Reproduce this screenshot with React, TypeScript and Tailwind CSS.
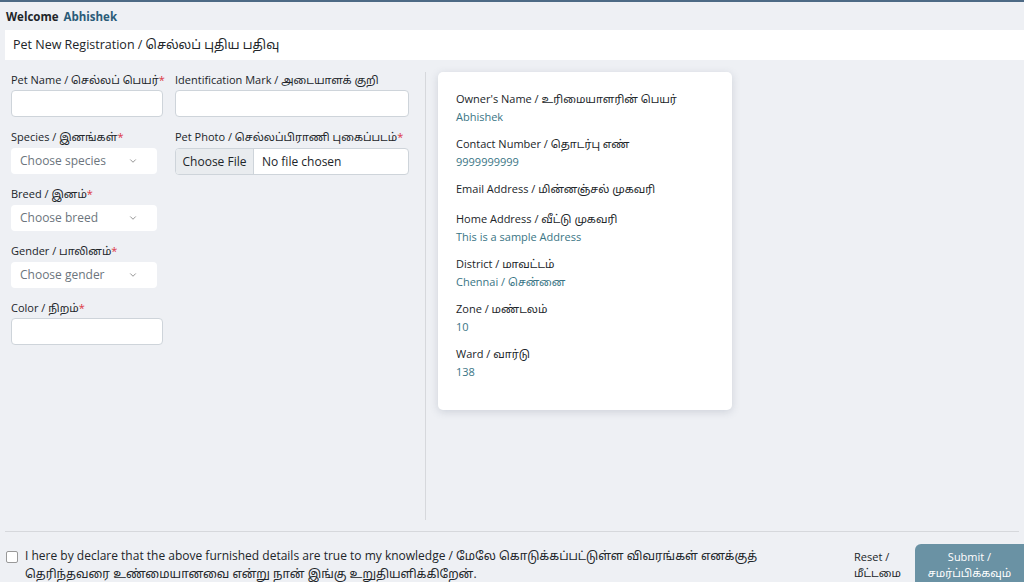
import { ChevronDown } from 'lucide-react'

const font = { fontFamily: '"Open Sans", "Noto Sans", "Noto Sans Tamil", sans-serif' }

function Label({ text, req }: { text: string; req?: boolean }) {
  return (
    <div className="text-[11px] leading-[14px] text-[#212529] mb-[3px] whitespace-nowrap">
      {text}
      {req && <span className="text-[#dc3545]">*</span>}
    </div>
  )
}

function Select({ placeholder }: { placeholder: string }) {
  return (
    <div className="w-[146px] h-[26px] bg-white rounded-[4px] flex items-center justify-between pl-[9px] pr-[19px] text-[12px] text-[#6c757d]">
      <span>{placeholder}</span>
      <ChevronDown size={10} strokeWidth={1.5} className="text-[#555]" />
    </div>
  )
}

const owner = [
  { label: "Owner's Name / உரிமையாளரின் பெயர்", value: 'Abhishek' },
  { label: 'Contact Number / தொடர்பு எண்', value: '9999999999' },
  { label: 'Email Address / மின்னஞ்சல் முகவரி', value: '' },
  { label: 'Home Address / வீட்டு முகவரி', value: 'This is a sample Address' },
  { label: 'District / மாவட்டம்', value: 'Chennai / சென்னை' },
  { label: 'Zone / மண்டலம்', value: '10' },
  { label: 'Ward / வார்டு', value: '138' },
]

export default function App() {
  return (
    <div style={font} className="w-[1024px] h-[582px] overflow-hidden bg-[#eef0f4] border-t-2 border-[#4d6a85] flex flex-col text-[#212529]">
      <div className="h-[28px] shrink-0 flex items-center px-[6px] pt-[1px] text-[11.5px] font-bold">
        Welcome <span className="ml-[5px] text-[#2a5b78]">Abhishek</span>
      </div>
      <div className="ml-[5px] h-[30px] shrink-0 bg-white flex items-center pl-[8px] text-[12.5px]">
        Pet New Registration / செல்லப் புதிய பதிவு
      </div>

      <div className="flex shrink-0 h-[472px] pt-[12px] pb-[11px] border-b border-[#d6d8dc] mx-[5px]">
        <div className="flex gap-[12px] pl-[6px] pt-[1px] w-[421px] border-r border-[#d6d8dc]">
          <div className="flex flex-col w-[152px]">
            <Label text="Pet Name / செல்லப் பெயர்" req />
            <div className="h-[27px] bg-white border border-[#ced4da] rounded-[4px] mb-[13px]" />
            <Label text="Species / இனங்கள்" req />
            <div className="mb-[13px] mt-[1px]"><Select placeholder="Choose species" /></div>
            <Label text="Breed / இனம்" req />
            <div className="mb-[13px] mt-[1px]"><Select placeholder="Choose breed" /></div>
            <Label text="Gender / பாலினம்" req />
            <div className="mb-[13px] mt-[1px]"><Select placeholder="Choose gender" /></div>
            <Label text="Color / நிறம்" req />
            <div className="h-[27px] bg-white border border-[#ced4da] rounded-[4px]" />
          </div>
          <div className="flex flex-col w-[234px]">
            <Label text="Identification Mark / அடையாளக் குறி" />
            <div className="h-[27px] bg-white border border-[#ced4da] rounded-[4px] mb-[13px]" />
            <Label text="Pet Photo / செல்லப்பிராணி புகைப்படம்" req />
            <div className="h-[27px] mt-[1px] bg-white border border-[#ced4da] rounded-[4px] flex overflow-hidden text-[12px]">
              <div className="w-[78px] bg-[#e9ecef] border-r border-[#ced4da] flex items-center justify-center">Choose File</div>
              <div className="flex items-center pl-[8px]">No file chosen</div>
            </div>
          </div>
        </div>
        <div className="pl-[12px]">
          <div className="w-[294px] h-[338px] bg-white rounded-[5px] shadow-[0_2px_8px_rgba(60,70,100,0.18)] pt-[19px] pl-[18px] flex flex-col gap-[12px]">
            {owner.map((o) =>
              o.value ? (
                <div key={o.label} className="h-[33px]">
                  <div className="text-[11px] leading-[15px] text-[#212529]">{o.label}</div>
                  <div className="text-[11px] leading-[15px] mt-[3px] text-[#3a7585]">{o.value}</div>
                </div>
              ) : (
                <div key={o.label} className="h-[18px] text-[11px] leading-[15px] text-[#212529]">{o.label}</div>
              ),
            )}
          </div>
        </div>
      </div>

      <div className="flex h-[50px] shrink-0 items-start overflow-hidden">
        <div className="flex items-start pl-[6px] pt-[15px] flex-1">
          <div className="w-[12px] h-[12px] border border-[#999] bg-white rounded-[2px] mt-[4px] mr-[7px] shrink-0" />
          <div className="text-[12px] leading-[18px] text-[#212529] w-[745px]">
            I here by declare that the above furnished details are true to my knowledge / மேலே கொடுக்கப்பட்டுள்ள விவரங்கள் எனக்குத் தெரிந்தவரை உண்மையானவை என்று நான் இங்கு உறுதியளிக்கிறேன்.
          </div>
        </div>
        <div className="text-[11px] leading-[16px] mt-[17px] mr-[12px] w-[49px]">
          Reset / மீட்டமை
        </div>
        <div className="w-[109px] h-[38px] mt-[12px] bg-[#6a92a4] rounded-tl-[6px] text-white text-[11px] leading-[16px] flex items-center justify-center text-center pt-[4px]">
          Submit /<br />சமர்ப்பிக்கவும்
        </div>
      </div>
    </div>
  )
}
